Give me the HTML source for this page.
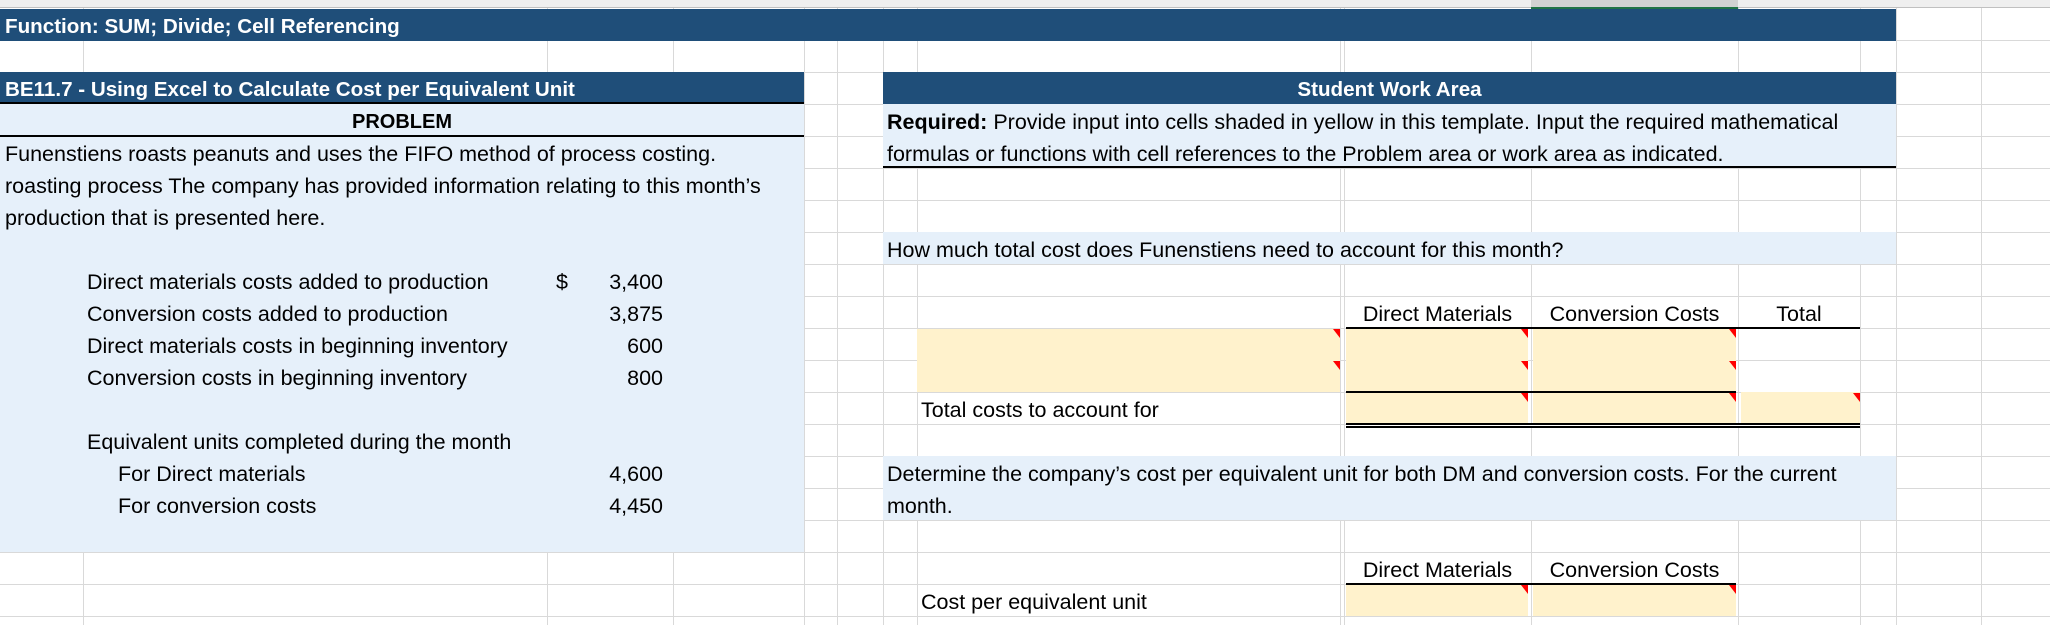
<!DOCTYPE html>
<html><head><meta charset="utf-8"><style>
*{margin:0;padding:0;box-sizing:border-box}
body{width:2050px;height:625px;overflow:hidden;position:relative;background:#fff;font-family:"Liberation Sans",sans-serif;font-size:21.5px;color:#000}
.a{position:absolute}
.vl{position:absolute;top:0;width:1px;height:625px;background:#d9d9d9}
.hl{position:absolute;left:0;height:1px;width:2050px;background:#d9d9d9}
.t{position:absolute;height:32px;line-height:36px;white-space:nowrap}
.hdr{background:#1f4e79;color:#fff;font-weight:bold}
.hdr2{color:#fff;font-weight:bold;font-size:20.6px}
.lb{background:#e6f0fa}
.y{background:#fff2cc}
.tri{position:absolute;width:0;height:0;border-top:9px solid #f00;border-left:7px solid transparent}
</style></head><body>
<div class="vl" style="left:83px"></div><div class="vl" style="left:547px"></div><div class="vl" style="left:673px"></div><div class="vl" style="left:804px"></div><div class="vl" style="left:837px"></div><div class="vl" style="left:883px"></div><div class="vl" style="left:917px"></div><div class="vl" style="left:1340px"></div><div class="vl" style="left:1344px"></div><div class="vl" style="left:1531px"></div><div class="vl" style="left:1738px"></div><div class="vl" style="left:1860px"></div><div class="vl" style="left:1896px"></div><div class="vl" style="left:1981px"></div>
<div class="hl" style="top:40px"></div><div class="hl" style="top:72px"></div><div class="hl" style="top:104px"></div><div class="hl" style="top:136px"></div><div class="hl" style="top:168px"></div><div class="hl" style="top:200px"></div><div class="hl" style="top:232px"></div><div class="hl" style="top:264px"></div><div class="hl" style="top:296px"></div><div class="hl" style="top:328px"></div><div class="hl" style="top:360px"></div><div class="hl" style="top:392px"></div><div class="hl" style="top:424px"></div><div class="hl" style="top:456px"></div><div class="hl" style="top:488px"></div><div class="hl" style="top:520px"></div><div class="hl" style="top:552px"></div><div class="hl" style="top:584px"></div><div class="hl" style="top:616px"></div>
<div class="a" style="left:0;top:0;width:2050px;height:8px;background:#efefef;border-bottom:1px solid #c0c0c0"></div>
<div class="a" style="left:1531px;top:0;width:207px;height:9px;background:#d2d2d2;border-bottom:2px solid #217346"></div>
<div class="a hdr" style="left:0;top:9px;width:1896px;height:32px"></div>
<div class="t hdr2" style="left:5px;top:9px">Function: SUM; Divide; Cell Referencing</div>
<div class="a hdr" style="left:0;top:72px;width:804px;height:32px;border-bottom:2px solid #000"></div>
<div class="t hdr2" style="left:5px;top:72px">BE11.7 - Using Excel to Calculate Cost per Equivalent Unit</div>
<div class="a hdr" style="left:883px;top:72px;width:1013px;height:32px"></div>
<div class="t hdr2" style="left:883px;top:72px;width:1013px;text-align:center">Student Work Area</div>
<div class="a lb" style="left:0;top:104px;width:804px;height:448px"></div>
<div class="a" style="left:0;top:135px;width:804px;height:2px;background:#000"></div>
<div class="t" style="left:0;top:104px;width:804px;text-align:center;font-weight:bold;font-size:20px">PROBLEM</div>
<div class="t" style="left:5px;top:136px">Funenstiens roasts peanuts and uses the FIFO method of process costing.</div>
<div class="t" style="left:5px;top:168px">roasting process The company has provided information relating to this month’s</div>
<div class="t" style="left:5px;top:200px">production that is presented here.</div>
<div class="t" style="left:87px;top:264px">Direct materials costs added to production</div>
<div class="t" style="left:556px;top:264px">$</div>
<div class="t" style="left:560px;top:264px;width:103px;text-align:right">3,400</div>
<div class="t" style="left:87px;top:296px">Conversion costs added to production</div>
<div class="t" style="left:560px;top:296px;width:103px;text-align:right">3,875</div>
<div class="t" style="left:87px;top:328px">Direct materials costs in beginning inventory</div>
<div class="t" style="left:560px;top:328px;width:103px;text-align:right">600</div>
<div class="t" style="left:87px;top:360px">Conversion costs in beginning inventory</div>
<div class="t" style="left:560px;top:360px;width:103px;text-align:right">800</div>
<div class="t" style="left:87px;top:424px">Equivalent units completed during the month</div>
<div class="t" style="left:118px;top:456px">For Direct materials</div>
<div class="t" style="left:560px;top:456px;width:103px;text-align:right">4,600</div>
<div class="t" style="left:118px;top:488px">For conversion costs</div>
<div class="t" style="left:560px;top:488px;width:103px;text-align:right">4,450</div>
<div class="a lb" style="left:883px;top:104px;width:1013px;height:64px;border-bottom:2px solid #000"></div>
<div class="t" style="left:887px;top:104px"><b>Required:</b> Provide input into cells shaded in yellow in this template. Input the required mathematical</div>
<div class="t" style="left:887px;top:136px">formulas or functions with cell references to the Problem area or work area as indicated.</div>
<div class="a lb" style="left:883px;top:232px;width:1013px;height:32px"></div>
<div class="t" style="left:887px;top:232px">How much total cost does Funenstiens need to account for this month?</div>
<div class="t" style="left:1344px;top:296px;width:187px;text-align:center">Direct Materials</div>
<div class="t" style="left:1531px;top:296px;width:207px;text-align:center">Conversion Costs</div>
<div class="t" style="left:1738px;top:296px;width:122px;text-align:center">Total</div>
<div class="a" style="left:1346px;top:327px;width:514px;height:2px;background:#000"></div>
<div class="a y" style="left:917px;top:329px;width:423px;height:63px"></div>
<div class="a y" style="left:1346px;top:329px;width:182px;height:63px"></div>
<div class="a y" style="left:1533px;top:329px;width:203px;height:63px"></div>
<div class="a" style="left:1346px;top:391px;width:390px;height:2px;background:#000"></div>
<div class="a y" style="left:1346px;top:393px;width:182px;height:30px"></div>
<div class="a y" style="left:1533px;top:393px;width:203px;height:30px"></div>
<div class="a y" style="left:1741px;top:392px;width:119px;height:31px"></div>
<div class="a" style="left:1346px;top:423px;width:514px;height:5px;border-top:2px solid #000;border-bottom:2px solid #000;background:#fff"></div>
<div class="t" style="left:921px;top:392px">Total costs to account for</div>
<div class="tri" style="left:1333px;top:329px"></div><div class="tri" style="left:1333px;top:361px"></div>
<div class="tri" style="left:1521px;top:329px"></div><div class="tri" style="left:1521px;top:361px"></div><div class="tri" style="left:1521px;top:393px"></div>
<div class="tri" style="left:1729px;top:329px"></div><div class="tri" style="left:1729px;top:361px"></div><div class="tri" style="left:1729px;top:393px"></div>
<div class="tri" style="left:1853px;top:393px"></div>
<div class="a lb" style="left:883px;top:456px;width:1013px;height:64px"></div>
<div class="t" style="left:887px;top:456px">Determine the company’s cost per equivalent unit for both DM and conversion costs. For the current</div>
<div class="t" style="left:887px;top:488px">month.</div>
<div class="t" style="left:1344px;top:552px;width:187px;text-align:center">Direct Materials</div>
<div class="t" style="left:1531px;top:552px;width:207px;text-align:center">Conversion Costs</div>
<div class="a" style="left:1346px;top:583px;width:390px;height:2px;background:#000"></div>
<div class="a y" style="left:1346px;top:585px;width:182px;height:31px"></div>
<div class="a y" style="left:1533px;top:585px;width:203px;height:31px"></div>
<div class="tri" style="left:1521px;top:585px"></div><div class="tri" style="left:1729px;top:585px"></div>
<div class="t" style="left:921px;top:584px">Cost per equivalent unit</div>
</body></html>
